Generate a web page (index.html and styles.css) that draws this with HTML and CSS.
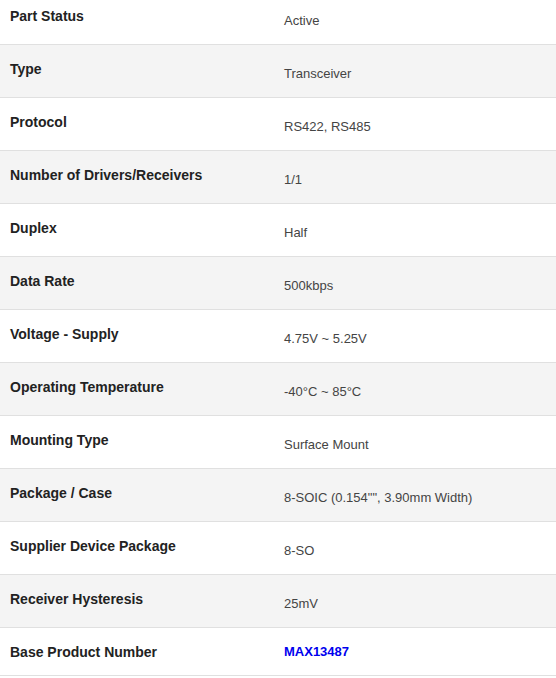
FILE: index.html
```html
<!DOCTYPE html>
<html lang="en">
<head>
<meta charset="utf-8">
<title>Product Attributes</title>
<link rel="stylesheet" href="styles.css">
</head>
<body>
<div class="specs">
  <div class="row"><div class="label">Part Status</div><div class="value">Active</div></div>
  <div class="row alt"><div class="label">Type</div><div class="value">Transceiver</div></div>
  <div class="row"><div class="label">Protocol</div><div class="value">RS422, RS485</div></div>
  <div class="row alt"><div class="label">Number of Drivers/Receivers</div><div class="value">1/1</div></div>
  <div class="row"><div class="label">Duplex</div><div class="value">Half</div></div>
  <div class="row alt"><div class="label">Data Rate</div><div class="value">500kbps</div></div>
  <div class="row"><div class="label">Voltage - Supply</div><div class="value">4.75V ~ 5.25V</div></div>
  <div class="row alt"><div class="label">Operating Temperature</div><div class="value">-40°C ~ 85°C</div></div>
  <div class="row"><div class="label">Mounting Type</div><div class="value">Surface Mount</div></div>
  <div class="row alt"><div class="label">Package / Case</div><div class="value">8-SOIC (0.154"", 3.90mm Width)</div></div>
  <div class="row"><div class="label">Supplier Device Package</div><div class="value">8-SO</div></div>
  <div class="row alt"><div class="label">Receiver Hysteresis</div><div class="value">25mV</div></div>
  <div class="row last"><div class="label">Base Product Number</div><div class="value"><a class="link" href="#">MAX13487</a></div></div>
</div>
</body>
</html>
```
FILE: styles.css
```css
html, body {
  margin: 0;
  padding: 0;
  background: #ffffff;
}
body {
  font-family: "Liberation Sans", Arial, sans-serif;
  overflow: hidden;
}
.specs {
  margin-top: -8px;
}
.row {
  display: grid;
  grid-template-columns: 284px 1fr;
  height: 52px;
  border-bottom: 1px solid #e0e0e0;
  background: #ffffff;
}
.row.alt {
  background: #f4f4f4;
}
.row.last {
  height: 47px;
}
.label {
  padding: 14px 0 0 10px;
  font-size: 14px;
  line-height: 20px;
  font-weight: bold;
  color: #222222;
}
.value {
  padding-top: 19px;
  font-size: 13px;
  line-height: 20px;
  color: #444444;
}
.row.last .value {
  padding-top: 14px;
}
.link {
  font-size: 13px;
  font-weight: bold;
  color: #0000ee;
  text-decoration: none;
}
```
